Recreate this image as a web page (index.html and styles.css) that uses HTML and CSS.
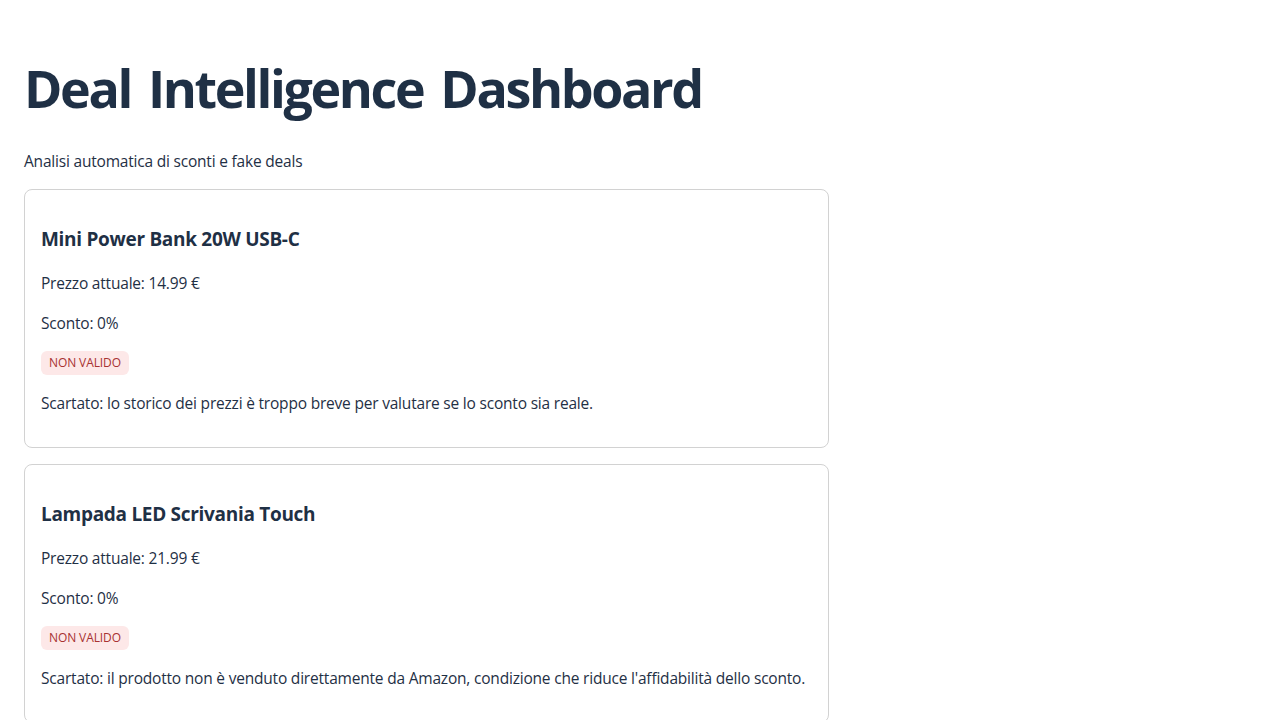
FILE: index.html
```html
<!DOCTYPE html>
<html lang="it">
  <head>
    <meta charset="utf-8" />
    <meta name="viewport" content="width=device-width, initial-scale=1.0" />
    <title>Deal Intelligence Dashboard</title>
    <link rel="stylesheet" href="styles.css">
  </head>
  <body>
    <h1 class="title">Deal Intelligence Dashboard</h1>
    <p class="subtitle">Analisi automatica di sconti e fake deals</p>

    <div class="deals">
      <div class="deal">
        <h3>Mini Power Bank 20W USB-C</h3>
        <p>Prezzo attuale: 14.99 €</p>
        <p>Sconto: 0%</p>
        <div class="badge-row"><span class="badge invalid">NON VALIDO</span></div>
        <p>Scartato: lo storico dei prezzi è troppo breve per valutare se lo sconto sia reale.</p>
      </div>

      <div class="deal">
        <h3>Lampada LED Scrivania Touch</h3>
        <p>Prezzo attuale: 21.99 €</p>
        <p>Sconto: 0%</p>
        <div class="badge-row"><span class="badge invalid">NON VALIDO</span></div>
        <p>Scartato: il prodotto non è venduto direttamente da Amazon, condizione che riduce l'affidabilità dello sconto.</p>
      </div>
    </div>
  </body>
</html>
```

FILE: styles.css
```css
body {
  margin: 0;
  padding: 24px;
  font-family: "Open Sans", "Noto Sans", sans-serif;
  font-size: 15.5px;
  letter-spacing: -0.2px;
  line-height: 24px;
  color: #1f3045;
  background: #fff;
}

.title {
  font-size: 52px;
  line-height: 1.2;
  font-weight: 700;
  letter-spacing: -2.4px;
  word-spacing: 6px;
  margin: 33px 0 30px;
}

.subtitle {
  margin: 0 0 16px;
}

.deal {
  width: 805px;
  box-sizing: border-box;
  padding: 16px;
  margin-bottom: 16px;
  border: 1px solid #d2d2d2;
  border-radius: 8px;
}

.deal h3 {
  font-size: 19px;
  line-height: 27px;
  letter-spacing: -0.3px;
  margin: 20px 0 18px;
}

.deal p {
  margin: 16px 0;
}

.deal h3 + p {
  margin-top: 0;
}

.badge-row {
  display: flex;
  margin: 16px 0;
}

.badge {
  padding: 4px 8px;
  font-size: 12px;
  line-height: 16px;
  letter-spacing: -0.1px;
  border-radius: 6px;
}

.badge.invalid {
  background-color: #fde8e8;
  color: #a83232;
}
```
